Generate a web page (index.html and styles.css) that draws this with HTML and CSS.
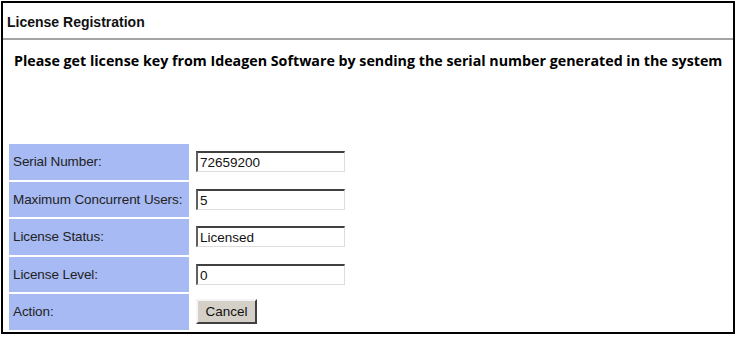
FILE: index.html
```html
<!DOCTYPE html>
<html>
<head>
<meta charset="utf-8">
<link rel="stylesheet" href="styles.css">
</head>
<body>
<div class="panel">
  <div class="panel-header">License Registration</div>
  <div class="panel-body">
    <p class="message">Please get license key from Ideagen Software by sending the serial number generated in the system</p>
    <div class="form-grid">
      <div class="label">Serial Number:</div>
      <div class="value"><input class="field" type="text" value="72659200"></div>
      <div class="label">Maximum Concurrent Users:</div>
      <div class="value"><input class="field" type="text" value="5"></div>
      <div class="label">License Status:</div>
      <div class="value"><input class="field" type="text" value="Licensed"></div>
      <div class="label">License Level:</div>
      <div class="value"><input class="field" type="text" value="0"></div>
      <div class="label">Action:</div>
      <div class="value"><button class="btn" type="button">Cancel</button></div>
    </div>
  </div>
</div>
</body>
</html>
```

FILE: styles.css
```css
html, body {
  margin: 0;
  padding: 0;
  background: #fff;
}
body {
  font-family: "Liberation Sans", Arial, sans-serif;
  color: #1a1a1a;
}
.panel {
  margin: 1px;
  width: 734px;
  height: 333px;
  box-sizing: border-box;
  border: 2px solid #000;
  display: flex;
  flex-direction: column;
}
.panel-header {
  height: 37px;
  box-sizing: border-box;
  border-bottom: 2px solid #a3a3a3;
  padding: 11px 0 0 4px;
  font-size: 14px;
  font-weight: bold;
  color: #111;
}
.panel-body {
  padding: 0 0 0 4px;
}
.message {
  margin: 11px 0 0 7px;
  font-family: "Open Sans", sans-serif;
  font-weight: bold;
  font-size: 14.25px;
  line-height: 20px;
  color: #000;
  white-space: nowrap;
}
.form-grid {
  margin-top: 73px;
  margin-left: 2px;
  display: grid;
  grid-template-columns: 180px 200px;
  grid-auto-rows: 35.5px;
  row-gap: 2px;
  column-gap: 2px;
}
.label {
  background: #a7baf3;
  display: flex;
  align-items: center;
  padding-left: 4px;
  font-size: 13.5px;
  color: #222;
  letter-spacing: -0.1px;
}
.value {
  display: flex;
  align-items: center;
  padding-left: 5px;
}
.field {
  width: 149px;
  height: 21px;
  box-sizing: border-box;
  margin: 0;
  padding: 1px 2px 0 2px;
  border: 1px solid;
  border-color: #555 #ddd #ddd #555;
  border-top: 2px solid #404040;
  border-left: 2px solid #606060;
  font-family: "Liberation Sans", Arial, sans-serif;
  font-size: 13.5px;
  color: #111;
  background: #fff;
  outline: none;
}
.btn {
  width: 61px;
  height: 25px;
  margin: 0;
  padding: 0;
  background: #d4d0c8;
  border: 2px solid;
  border-color: #f4f4f4 #404040 #404040 #f4f4f4;
  font-family: "Liberation Sans", Arial, sans-serif;
  font-size: 13.5px;
  color: #111;
}
```
